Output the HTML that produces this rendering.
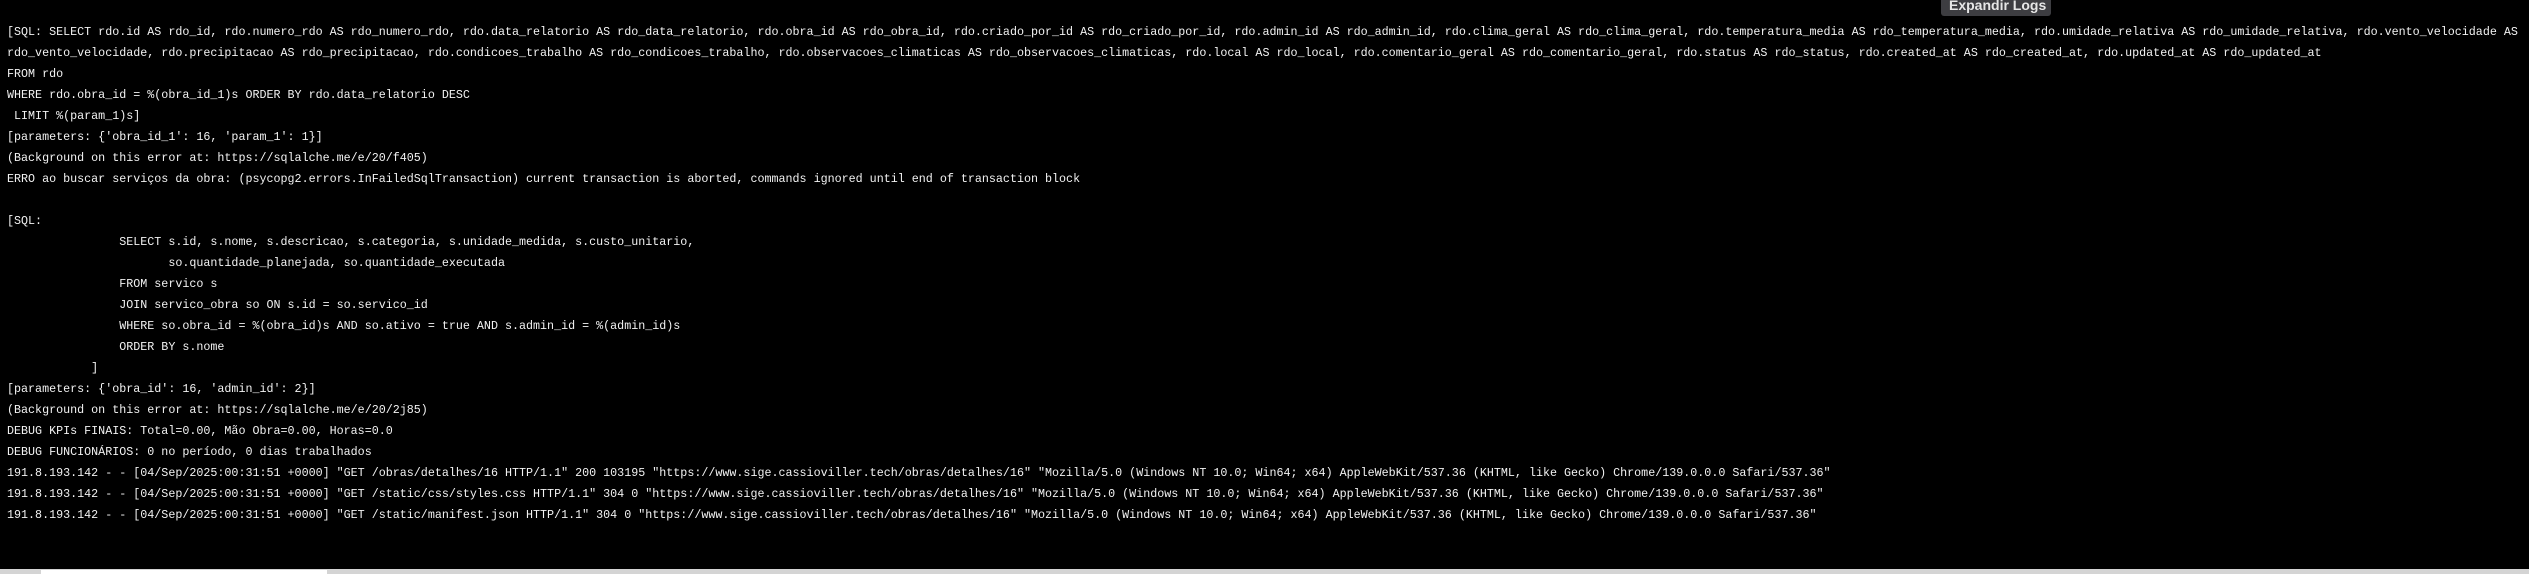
<!DOCTYPE html>
<html><head><meta charset="utf-8">
<style>
html,body{margin:0;padding:0;background:#000;width:2529px;height:574px;overflow:hidden;position:relative}
pre{position:absolute;left:7px;top:22px;margin:0;font-family:"Liberation Mono",monospace;font-size:11.7px;line-height:21px;color:#f2f2f2;white-space:pre}
.btn{position:absolute;left:1941px;top:0;width:110px;height:16px;background:#3d3d41;border-radius:0 0 3px 3px;overflow:hidden}
.btn span{position:absolute;left:8px;top:-3px;font-family:"Liberation Sans",sans-serif;font-size:14px;font-weight:bold;color:#e6e6e6;white-space:nowrap;line-height:16px}
.sb{position:absolute;left:0;top:569px;width:2529px;height:5px;background:#d4d4d4}
.th{position:absolute;left:41px;top:570px;width:286px;height:4px;background:#fff}
</style></head><body>
<pre>[SQL: SELECT rdo.id AS rdo_id, rdo.numero_rdo AS rdo_numero_rdo, rdo.data_relatorio AS rdo_data_relatorio, rdo.obra_id AS rdo_obra_id, rdo.criado_por_id AS rdo_criado_por_id, rdo.admin_id AS rdo_admin_id, rdo.clima_geral AS rdo_clima_geral, rdo.temperatura_media AS rdo_temperatura_media, rdo.umidade_relativa AS rdo_umidade_relativa, rdo.vento_velocidade AS
rdo_vento_velocidade, rdo.precipitacao AS rdo_precipitacao, rdo.condicoes_trabalho AS rdo_condicoes_trabalho, rdo.observacoes_climaticas AS rdo_observacoes_climaticas, rdo.local AS rdo_local, rdo.comentario_geral AS rdo_comentario_geral, rdo.status AS rdo_status, rdo.created_at AS rdo_created_at, rdo.updated_at AS rdo_updated_at
FROM rdo
WHERE rdo.obra_id = %(obra_id_1)s ORDER BY rdo.data_relatorio DESC
 LIMIT %(param_1)s]
[parameters: {'obra_id_1': 16, 'param_1': 1}]
(Background on this error at: https://sqlalche.me/e/20/f405)
ERRO ao buscar serviços da obra: (psycopg2.errors.InFailedSqlTransaction) current transaction is aborted, commands ignored until end of transaction block

[SQL: 
                SELECT s.id, s.nome, s.descricao, s.categoria, s.unidade_medida, s.custo_unitario,
                       so.quantidade_planejada, so.quantidade_executada
                FROM servico s
                JOIN servico_obra so ON s.id = so.servico_id
                WHERE so.obra_id = %(obra_id)s AND so.ativo = true AND s.admin_id = %(admin_id)s
                ORDER BY s.nome
            ]
[parameters: {'obra_id': 16, 'admin_id': 2}]
(Background on this error at: https://sqlalche.me/e/20/2j85)
DEBUG KPIs FINAIS: Total=0.00, Mão Obra=0.00, Horas=0.0
DEBUG FUNCIONÁRIOS: 0 no período, 0 dias trabalhados
191.8.193.142 - - [04/Sep/2025:00:31:51 +0000] "GET /obras/detalhes/16 HTTP/1.1" 200 103195 "https://www.sige.cassioviller.tech/obras/detalhes/16" "Mozilla/5.0 (Windows NT 10.0; Win64; x64) AppleWebKit/537.36 (KHTML, like Gecko) Chrome/139.0.0.0 Safari/537.36"
191.8.193.142 - - [04/Sep/2025:00:31:51 +0000] "GET /static/css/styles.css HTTP/1.1" 304 0 "https://www.sige.cassioviller.tech/obras/detalhes/16" "Mozilla/5.0 (Windows NT 10.0; Win64; x64) AppleWebKit/537.36 (KHTML, like Gecko) Chrome/139.0.0.0 Safari/537.36"
191.8.193.142 - - [04/Sep/2025:00:31:51 +0000] "GET /static/manifest.json HTTP/1.1" 304 0 "https://www.sige.cassioviller.tech/obras/detalhes/16" "Mozilla/5.0 (Windows NT 10.0; Win64; x64) AppleWebKit/537.36 (KHTML, like Gecko) Chrome/139.0.0.0 Safari/537.36"</pre>
<div class="btn"><span>Expandir Logs</span></div>
<div class="sb"></div><div class="th"></div>
</body></html>
